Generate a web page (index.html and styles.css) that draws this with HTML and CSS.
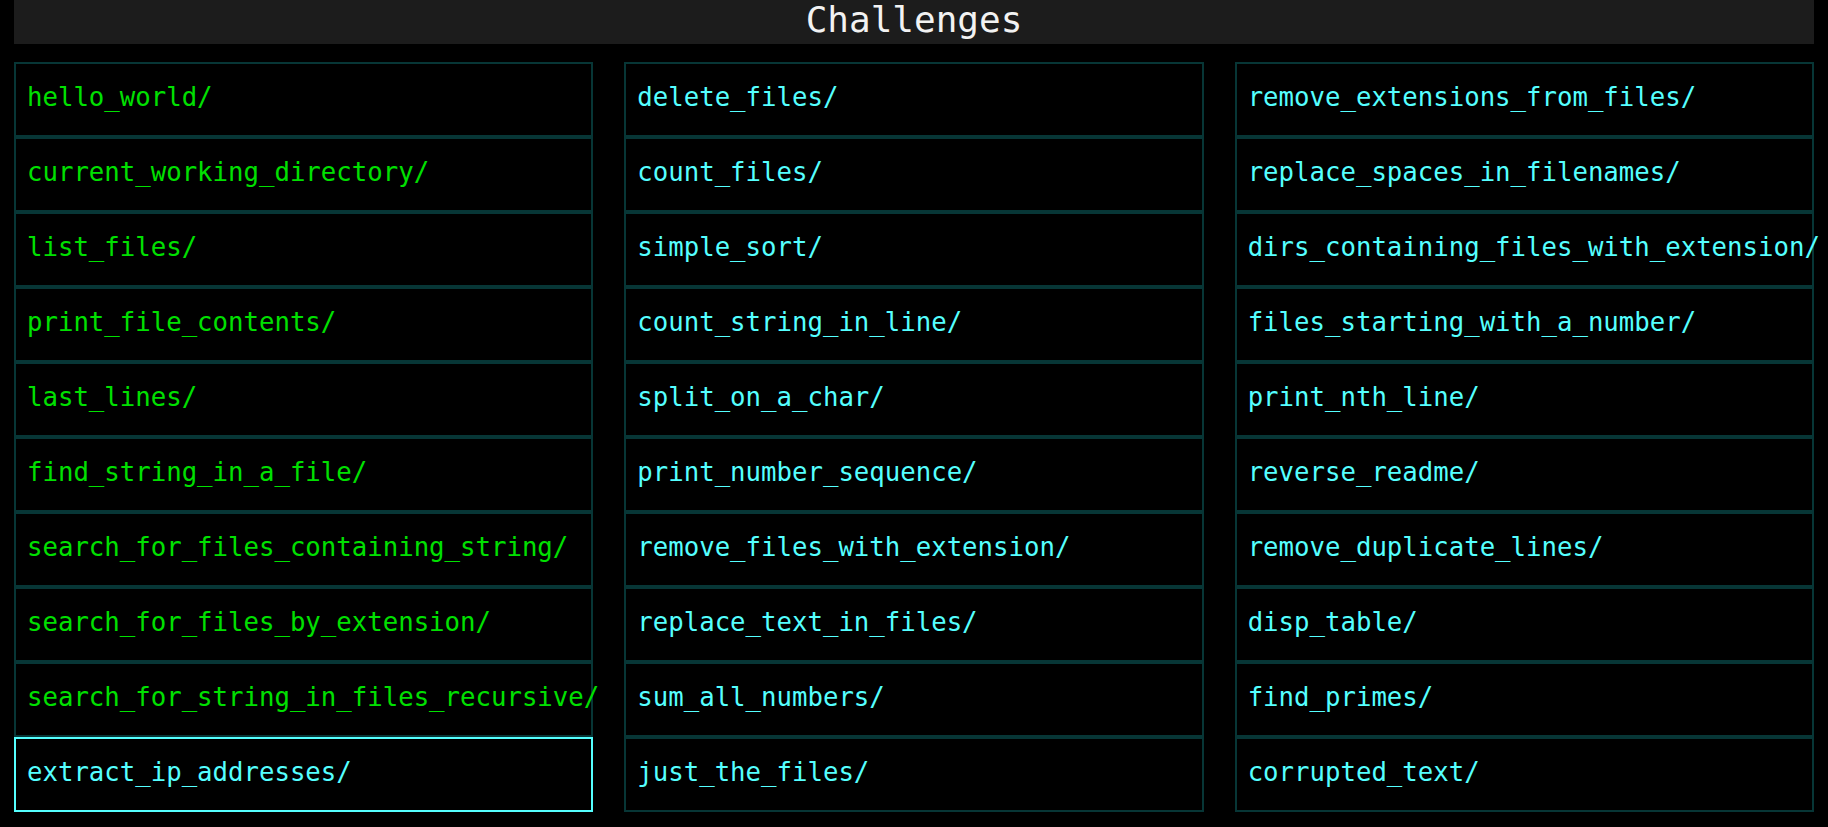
FILE: index.html
```html
<!DOCTYPE html>
<html lang="en">
<head>
<meta charset="utf-8">
<title>Challenges</title>
<link rel="stylesheet" href="styles.css">
</head>
<body>
<div class="page">
  <header class="title-bar"><h1 class="title">Challenges</h1></header>
  <main class="grid">
    <ul class="column">
      <li class="item done"><a href="#">hello_world/</a></li>
      <li class="item done"><a href="#">current_working_directory/</a></li>
      <li class="item done"><a href="#">list_files/</a></li>
      <li class="item done"><a href="#">print_file_contents/</a></li>
      <li class="item done"><a href="#">last_lines/</a></li>
      <li class="item done"><a href="#">find_string_in_a_file/</a></li>
      <li class="item done"><a href="#">search_for_files_containing_string/</a></li>
      <li class="item done"><a href="#">search_for_files_by_extension/</a></li>
      <li class="item done"><a href="#">search_for_string_in_files_recursive/</a></li>
      <li class="item active"><a href="#">extract_ip_addresses/</a></li>
    </ul>
    <ul class="column">
      <li class="item"><a href="#">delete_files/</a></li>
      <li class="item"><a href="#">count_files/</a></li>
      <li class="item"><a href="#">simple_sort/</a></li>
      <li class="item"><a href="#">count_string_in_line/</a></li>
      <li class="item"><a href="#">split_on_a_char/</a></li>
      <li class="item"><a href="#">print_number_sequence/</a></li>
      <li class="item"><a href="#">remove_files_with_extension/</a></li>
      <li class="item"><a href="#">replace_text_in_files/</a></li>
      <li class="item"><a href="#">sum_all_numbers/</a></li>
      <li class="item"><a href="#">just_the_files/</a></li>
    </ul>
    <ul class="column">
      <li class="item"><a href="#">remove_extensions_from_files/</a></li>
      <li class="item"><a href="#">replace_spaces_in_filenames/</a></li>
      <li class="item"><a href="#">dirs_containing_files_with_extension/</a></li>
      <li class="item"><a href="#">files_starting_with_a_number/</a></li>
      <li class="item"><a href="#">print_nth_line/</a></li>
      <li class="item"><a href="#">reverse_readme/</a></li>
      <li class="item"><a href="#">remove_duplicate_lines/</a></li>
      <li class="item"><a href="#">disp_table/</a></li>
      <li class="item"><a href="#">find_primes/</a></li>
      <li class="item"><a href="#">corrupted_text/</a></li>
    </ul>
  </main>
</div>
</body>
</html>
```
FILE: styles.css
```css
html, body {
  margin: 0;
  padding: 0;
  background: #000;
}

body {
  font-family: "DejaVu Sans Mono", "Liberation Mono", monospace;
  color: #55ffff;
}

.page {
  padding: 0 14px;
}

.title-bar {
  background: #1c1c1c;
  height: 44px;
}

.title {
  margin: 0;
  font-size: 36px;
  font-weight: normal;
  line-height: 40px;
  text-align: center;
  color: #f2f2f2;
}

.grid {
  display: grid;
  grid-template-columns: repeat(3, 1fr);
  column-gap: 31px;
  margin-top: 18px;
}

.column {
  list-style: none;
  margin: 0;
  padding: 0;
  display: flex;
  flex-direction: column;
  min-width: 0;
}

.item {
  box-sizing: border-box;
  height: 75px;
  border: 2px solid #073636;
  padding: 18px 11px 0;
  font-size: 25.7px;
  line-height: 30px;
  white-space: nowrap;
}

.item a {
  color: #55ffff;
  text-decoration: none;
}

.item.done a {
  color: #00e000;
}

.item.active {
  border-color: #55ffff;
}

.item.active a {
  color: #55ffff;
}
```
